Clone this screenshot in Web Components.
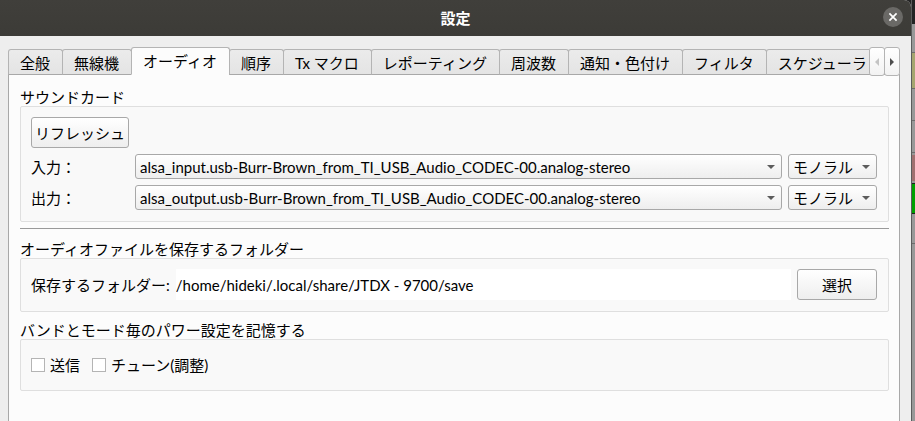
<!DOCTYPE html>
<html lang="ja">
<head>
<meta charset="utf-8">
<title>設定</title>
<style>
  body {
    font-family: Lato, 'Noto Sans CJK JP', sans-serif;
    font-size: 15px;
    line-height: 18px;
    margin: 0;
    overflow: hidden;
  }

  .desktop {
    background: linear-gradient( #242424 24px, #989898 24px );
    display: grid;
    grid-template-columns: minmax( 0, 1fr ) 4px;
    min-height: 100vh;
  }

  .fields {
    display: flex;
    flex-direction: column;
    gap: 6px;
  }

  .row {
    align-items: center;
    display: flex;
    gap: 12px;
  }
</style>
</head>
<body>
<div class="desktop">
  <jt-dialog label="設定">
    <jt-tabs>
      <jt-tab label="全般"></jt-tab>
      <jt-tab label="無線機"></jt-tab>
      <jt-tab label="オーディオ" selected></jt-tab>
      <jt-tab label="順序"></jt-tab>
      <jt-tab label="Tx マクロ"></jt-tab>
      <jt-tab label="レポーティング"></jt-tab>
      <jt-tab label="周波数"></jt-tab>
      <jt-tab label="通知・色付け"></jt-tab>
      <jt-tab label="フィルタ"></jt-tab>
      <jt-tab label="スケジューラ"></jt-tab>
    </jt-tabs>
    <jt-pane>
      <jt-group label="サウンドカード">
        <div class="fields">
          <jt-button label="リフレッシュ" size="s"></jt-button>
          <jt-device label="入力：" device="alsa_input.usb-Burr-Brown_from_TI_USB_Audio_CODEC-00.analog-stereo" channel="モノラル"></jt-device>
          <jt-device label="出力：" device="alsa_output.usb-Burr-Brown_from_TI_USB_Audio_CODEC-00.analog-stereo" channel="モノラル"></jt-device>
        </div>
      </jt-group>
      <jt-divider></jt-divider>
      <jt-group label="オーディオファイルを保存するフォルダー">
        <jt-folder label="保存するフォルダー:" value="/home/hideki/.local/share/JTDX - 9700/save"></jt-folder>
      </jt-group>
      <jt-group label="バンドとモード毎のパワー設定を記憶する">
        <div class="row">
          <jt-check label="送信"></jt-check>
          <jt-check label="チューン(調整)"></jt-check>
        </div>
      </jt-group>
    </jt-pane>
  </jt-dialog>
  <jt-backdrop></jt-backdrop>
</div>

<script>
// Shared by every element
// Attaches root, fills in markup
class JTElement extends HTMLElement {
  constructor() {
    super();

    const template = document.createElement( 'template' );
    template.innerHTML = this.constructor.markup;

    this.attachShadow( {mode: 'open'} );
    this.shadowRoot.appendChild( template.content.cloneNode( true ) );
  }

  $( selector ) {
    return this.shadowRoot.querySelector( selector );
  }

  get label() {
    return this.getAttribute( 'label' );
  }
}

class JTDialog extends JTElement {
  static markup = /* template */ `
    <style>
      :host {
        background: #eeeeee;
        border-radius: 0 7px 0 0;
        display: flex;
        flex-direction: column;
      }

      header {
        align-items: center;
        background: linear-gradient( #403f3b, #3c3b37 );
        border-radius: 0 7px 0 0;
        color: #ffffff;
        display: grid;
        grid-template-columns: 1fr auto 1fr;
        height: 36px;
        padding: 0 8px 0 8px;
      }

      h1 {
        font-size: 15px;
        font-weight: 700;
        grid-column: 2;
        margin: 0;
      }

      button {
        background: #6a6966;
        border: none;
        border-radius: 50%;
        height: 20px;
        justify-self: end;
        margin: 0 0 2px 0;
        padding: 0;
        width: 20px;
      }

      svg {
        display: block;
        height: 20px;
        width: 20px;
      }

      main {
        display: flex;
        flex: 1;
        flex-direction: column;
        padding: 11px 11px 0 8px;
      }
    </style>
    <header>
      <h1></h1>
      <button type="button" aria-label="閉じる">
        <svg viewBox="0 0 20 20" fill="none" stroke="#ffffff" stroke-width="1.7">
          <path d="M6.4 6.4 L13.6 13.6 M13.6 6.4 L6.4 13.6"/>
        </svg>
      </button>
    </header>
    <main><slot></slot></main>
  `;

  connectedCallback() {
    this.$( 'h1' ).textContent = this.label;
  }
}

// The strip overlaps the top border of the pane below
class JTTabs extends JTElement {
  static markup = /* template */ `
    <style>
      :host {
        display: flex;
        margin-bottom: -2px;
        position: relative;
      }

      .strip {
        align-items: flex-end;
        display: flex;
        flex: 1;
        height: 28px;
        min-width: 0;
        overflow: hidden;
      }

      nav {
        display: flex;
        height: 29px;
      }

      nav button {
        align-items: center;
        background: linear-gradient( #ffffff, #f2f2f2 );
        border: solid 1px #b4b4b4;
        border-radius: 3px;
        box-sizing: border-box;
        display: flex;
        justify-content: center;
        padding: 0;
        width: 16px;
      }

      nav button + button {
        margin-left: -1px;
      }

      svg {
        fill: #4c4c4c;
        height: 8px;
        width: 4px;
      }

      button:disabled svg {
        fill: #c4c4c4;
      }
    </style>
    <div class="strip" role="tablist"><slot></slot></div>
    <nav>
      <button type="button" aria-label="前へ" disabled><svg viewBox="0 0 4 8"><path d="M4 0 V8 L0 4 Z"/></svg></button>
      <button type="button" aria-label="次へ"><svg viewBox="0 0 4 8"><path d="M0 0 V8 L4 4 Z"/></svg></button>
    </nav>
  `;
}

class JTTab extends JTElement {
  static markup = /* template */ `
    <style>
      :host {
        display: block;
        flex: none;
      }

      button {
        background: linear-gradient( #ebebeb, #e4e4e4 );
        border: solid 1px #b4b4b4;
        border-bottom-color: #a8a8a8;
        border-radius: 3px 3px 0 0;
        box-sizing: border-box;
        color: #000000;
        display: block;
        font: inherit;
        height: 26px;
        margin-right: -1px;
        padding: 1px 12px 0 11px;
        white-space: nowrap;
      }

      :host( [selected] ) button {
        background: #fcfcfc;
        border-bottom-color: #fcfcfc;
        height: 28px;
        padding: 0 12px 0 11px;
      }
    </style>
    <button type="button" role="tab"></button>
  `;

  connectedCallback() {
    this.$( 'button' ).textContent = this.label;
    this.$( 'button' ).setAttribute( 'aria-selected', this.hasAttribute( 'selected' ) );
  }
}

class JTPane extends JTElement {
  static markup = /* template */ `
    <style>
      :host {
        background: #fcfcfc;
        border: solid 1px #a8a8a8;
        border-bottom: none;
        display: flex;
        flex: 1;
        flex-direction: column;
        gap: 9px;
        padding: 13px 10px 0 11px;
      }
    </style>
    <slot></slot>
  `;
}

class JTGroup extends JTElement {
  static markup = /* template */ `
    <style>
      :host {
        display: block;
      }

      fieldset {
        border: none;
        margin: 0;
        min-width: 0;
        padding: 0;
      }

      legend {
        padding: 0;
      }

      .box {
        background: #f9f9f9;
        border: solid 1px #dfdfdf;
        border-radius: 2px;
        padding: 10px 11px 11px 10px;
      }
    </style>
    <fieldset>
      <legend></legend>
      <div class="box"><slot></slot></div>
    </fieldset>
  `;

  connectedCallback() {
    this.$( 'legend' ).textContent = this.label;
  }
}

class JTDivider extends JTElement {
  static markup = /* template */ `
    <style>
      :host {
        background: #9a9a9a;
        display: block;
        height: 1px;
        margin: -3px 0 2px 0;
      }
    </style>
  `;
}

class JTButton extends JTElement {
  static markup = /* template */ `
    <style>
      :host {
        display: block;
      }

      button {
        background: linear-gradient( #ffffff, #eeeeee );
        border: solid 1px #a8a8a8;
        border-radius: 3px;
        box-sizing: border-box;
        color: #000000;
        display: block;
        font: inherit;
        height: 31px;
        padding: 0 24px 0 24px;
        white-space: nowrap;
      }

      :host( [size=s] ) button {
        padding: 0 3px 0 3px;
      }
    </style>
    <button type="button"></button>
  `;

  connectedCallback() {
    this.$( 'button' ).textContent = this.label;
  }
}

class JTSelect extends JTElement {
  static markup = /* template */ `
    <style>
      :host {
        align-items: center;
        display: grid;
      }

      select {
        appearance: none;
        background: linear-gradient( #ffffff, #eeeeee );
        border: solid 1px #a8a8a8;
        border-radius: 3px;
        box-sizing: border-box;
        color: #000000;
        font: inherit;
        grid-area: 1 / 1;
        height: 25px;
        min-width: 0;
        padding: 0 20px 0 4px;
        width: 100%;
      }

      svg {
        fill: #5c5c5c;
        grid-area: 1 / 1;
        height: 4px;
        justify-self: end;
        margin-right: 7px;
        pointer-events: none;
        width: 8px;
      }
    </style>
    <select><option></option></select>
    <svg viewBox="0 0 8 4"><path d="M0 0 H8 L4 4 Z"/></svg>
  `;

  static get observedAttributes() {
    return [
      'label',
      'value'
    ];
  }

  attributeChangedCallback( name, old, value ) {
    if( name === 'value' ) {
      this.$( 'option' ).textContent = value;
    } else {
      this.$( 'select' ).setAttribute( 'aria-label', value );
    }
  }
}

class JTDevice extends JTElement {
  static markup = /* template */ `
    <style>
      :host {
        align-items: center;
        display: flex;
        gap: 6px;
      }

      span {
        flex: none;
        width: 98px;
      }

      .device {
        flex: 1;
        min-width: 0;
      }

      .channel {
        flex: none;
        width: 89px;
      }
    </style>
    <span></span>
    <jt-select class="device"></jt-select>
    <jt-select class="channel"></jt-select>
  `;

  connectedCallback() {
    this.$( 'span' ).textContent = this.label;
    for( const name of ['device', 'channel'] ) {
      const select = this.$( '.' + name );
      select.setAttribute( 'label', this.label );
      select.setAttribute( 'value', this.getAttribute( name ) );
    }
  }
}

class JTFolder extends JTElement {
  static markup = /* template */ `
    <style>
      :host {
        align-items: center;
        display: flex;
        gap: 6px;
      }

      label {
        flex: none;
      }

      input {
        background: #ffffff;
        border: none;
        box-sizing: border-box;
        color: #000000;
        flex: 1;
        font: inherit;
        height: 31px;
        min-width: 0;
        padding: 0;
      }
    </style>
    <label for="path"></label>
    <input id="path" type="text">
    <jt-button label="選択"></jt-button>
  `;

  connectedCallback() {
    this.$( 'label' ).textContent = this.label;
    this.$( 'input' ).value = this.getAttribute( 'value' );
  }
}

class JTCheck extends JTElement {
  static markup = /* template */ `
    <style>
      :host {
        display: block;
      }

      label {
        align-items: center;
        display: flex;
        gap: 5px;
        height: 29px;
      }

      input {
        appearance: none;
        background: #ffffff;
        border: solid 1px #b4b4b4;
        box-sizing: border-box;
        height: 14px;
        margin: 0;
        width: 14px;
      }
    </style>
    <label><input type="checkbox"><span></span></label>
  `;

  connectedCallback() {
    this.$( 'span' ).textContent = this.label;
  }
}

// Sliver of the main window behind the dialog
class JTBackdrop extends JTElement {
  static markup = /* template */ `
    <style>
      :host {
        border-left: solid 1px #5c5c5c;
        display: block;
      }

      svg {
        display: block;
        width: 100%;
      }
    </style>
    <svg viewBox="0 0 3 250" height="250" preserveAspectRatio="none">
      <path fill="#242424" d="M0 0 H3 V24 H0 Z"/>
      <path fill="#a5a56f" d="M0 53 H3 V88 H0 Z"/>
      <path fill="#a07070" d="M0 155 H3 V181 H0 Z"/>
      <path fill="#00a000" d="M0 183 H3 V213 H0 Z"/>
      <path stroke="#6c6c6c" d="M0 52.5 H3 M0 88.5 H3 M0 120.5 H3 M0 152.5 H3 M0 243.5 H3"/>
      <path stroke="#202020" d="M0 183.5 H3 M0 213.5 H3"/>
    </svg>
  `;
}

window.customElements.define( 'jt-dialog', JTDialog );
window.customElements.define( 'jt-tabs', JTTabs );
window.customElements.define( 'jt-tab', JTTab );
window.customElements.define( 'jt-pane', JTPane );
window.customElements.define( 'jt-group', JTGroup );
window.customElements.define( 'jt-divider', JTDivider );
window.customElements.define( 'jt-button', JTButton );
window.customElements.define( 'jt-select', JTSelect );
window.customElements.define( 'jt-device', JTDevice );
window.customElements.define( 'jt-folder', JTFolder );
window.customElements.define( 'jt-check', JTCheck );
window.customElements.define( 'jt-backdrop', JTBackdrop );
</script>
</body>
</html>
